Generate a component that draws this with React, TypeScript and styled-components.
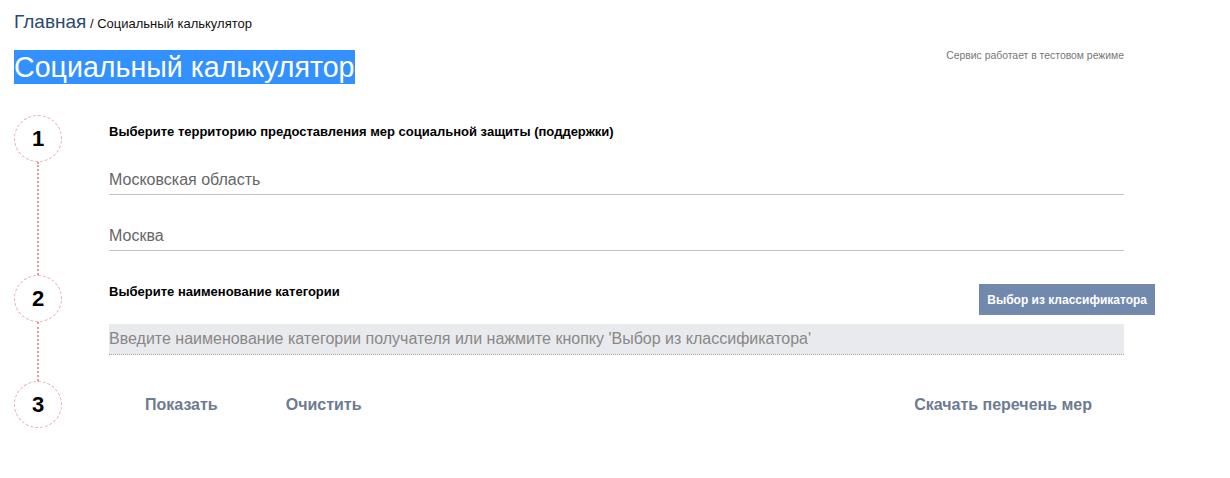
import styled, { createGlobalStyle } from 'styled-components'

const GlobalStyle = createGlobalStyle`
  body {
    margin: 0;
    background: #fff;
    font-family: 'Liberation Sans', Arial, sans-serif;
  }
`

const Page = styled.div`
  padding: 12px 0 0 14px;
`

const Breadcrumbs = styled.div`
  height: 22px;
  line-height: 22px;
  font-size: 13px;
  color: #111;
`

const HomeLink = styled.a`
  font-size: 19px;
  line-height: 1;
  color: #2d4a6e;
  text-decoration: none;
`

const Header = styled.div`
  display: flex;
  justify-content: space-between;
  align-items: flex-start;
  width: 1110px;
  margin-top: 16px;
`

const Title = styled.h1`
  margin: 0;
  display: inline-block;
  font-size: 28.6px;
  font-weight: 400;
  line-height: 34px;
  color: #fff;
  background: #3390ff;
`

const TestNote = styled.span`
  font-size: 10.4px;
  line-height: 12px;
  color: #777;
`

const Steps = styled.div`
  margin-top: 31px;
  width: 1141px;
`

const StepRow = styled.div<{ height: number }>`
  display: grid;
  grid-template-columns: 48px 1fr;
  column-gap: 47px;
  height: ${({ height }) => height}px;
`

const StepMarker = styled.div`
  display: flex;
  flex-direction: column;
  align-items: center;
`

const Circle = styled.div`
  box-sizing: border-box;
  width: 48px;
  height: 47px;
  flex: none;
  border: 1px dashed #e8a9ad;
  border-radius: 50%;
  display: flex;
  align-items: center;
  justify-content: center;
  font-size: 22px;
  font-weight: 700;
  color: #000;
`

const Connector = styled.div`
  flex: 1;
  border-left: 2px dotted #e8959d;
`

const StepBody = styled.div`
  display: flex;
  flex-direction: column;
`

const StepLabel = styled.div`
  margin-top: 9px;
  font-size: 13px;
  font-weight: 700;
  line-height: 16px;
  color: #000;
`

const LabelRow = styled.div`
  display: flex;
  justify-content: space-between;
  align-items: flex-start;
`

const Field = styled.div<{ gap: number }>`
  width: 1015px;
  margin-top: ${({ gap }) => gap}px;
  padding-bottom: 5px;
  font-size: 16px;
  line-height: 18px;
  color: #666;
  border-bottom: 1px solid #c4c4c4;
`

const ClassifierButton = styled.button`
  margin-top: 9px;
  height: 31px;
  padding: 0 8px;
  border: none;
  background: #7189ad;
  color: #fff;
  font-family: inherit;
  font-size: 12px;
  font-weight: 700;
  cursor: pointer;
`

const SearchInput = styled.input`
  box-sizing: border-box;
  width: 1015px;
  height: 31px;
  margin-top: 9px;
  padding: 0 0 1px;
  border: none;
  border-bottom: 1px dotted #a9a9a9;
  background: #e9eaed;
  font-family: inherit;
  font-size: 16px;
  color: #333;
  outline: none;

  &::placeholder {
    color: #888;
  }
`

const Actions = styled.div`
  display: flex;
  align-items: center;
  width: 1015px;
  height: 47px;
  padding: 0 32px 0 36px;
  box-sizing: border-box;
  gap: 68px;
`

const ActionButton = styled.button<{ pushRight?: boolean }>`
  padding: 0;
  border: none;
  background: none;
  font-family: inherit;
  font-size: 16px;
  font-weight: 700;
  color: #6d7b91;
  cursor: pointer;
  margin-left: ${({ pushRight }) => (pushRight ? 'auto' : '0')};
`

const App = () => (
  <>
    <GlobalStyle />
    <Page>
      <Breadcrumbs>
        <HomeLink href="#">Главная</HomeLink> / Социальный калькулятор
      </Breadcrumbs>
      <Header>
        <Title>Социальный калькулятор</Title>
        <TestNote>Сервис работает в тестовом режиме</TestNote>
      </Header>
      <Steps>
        <StepRow height={160}>
          <StepMarker>
            <Circle>1</Circle>
            <Connector />
          </StepMarker>
          <StepBody>
            <StepLabel>
              Выберите территорию предоставления мер социальной защиты (поддержки)
            </StepLabel>
            <Field gap={31}>Московская область</Field>
            <Field gap={32}>Москва</Field>
          </StepBody>
        </StepRow>
        <StepRow height={106}>
          <StepMarker>
            <Circle>2</Circle>
            <Connector />
          </StepMarker>
          <StepBody>
            <LabelRow>
              <StepLabel>Выберите наименование категории</StepLabel>
              <ClassifierButton>Выбор из классификатора</ClassifierButton>
            </LabelRow>
            <SearchInput placeholder="Введите наименование категории получателя или нажмите кнопку 'Выбор из классификатора'" />
          </StepBody>
        </StepRow>
        <StepRow height={47}>
          <StepMarker>
            <Circle>3</Circle>
          </StepMarker>
          <Actions>
            <ActionButton>Показать</ActionButton>
            <ActionButton>Очистить</ActionButton>
            <ActionButton pushRight>Скачать перечень мер</ActionButton>
          </Actions>
        </StepRow>
      </Steps>
    </Page>
  </>
)

export default App
